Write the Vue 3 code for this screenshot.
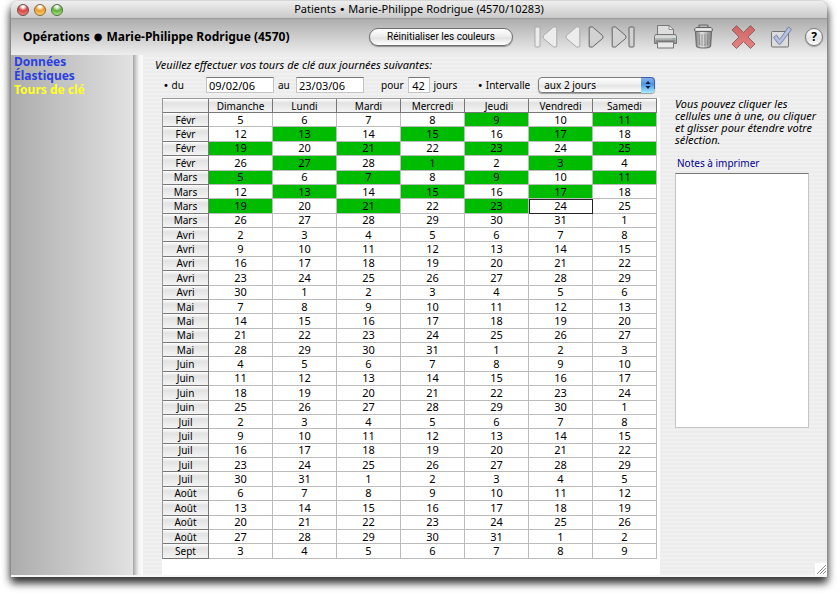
<script setup>
import { ref } from 'vue'

const days = ['Dimanche', 'Lundi', 'Mardi', 'Mercredi', 'Jeudi', 'Vendredi', 'Samedi']
const months = ['Janv', 'Févr', 'Mars', 'Avri', 'Mai', 'Juin', 'Juil', 'Août', 'Sept', 'Octo', 'Nove', 'Déce']
const DAY = 86400000

const start = ref('09/02/06')
const end = ref('23/03/06')
const duration = ref('42')
const interval = ref('aux 2 jours')
const notes = ref('')

const firstCell = Date.UTC(2006, 1, 5)
const firstTurn = Date.UTC(2006, 1, 9)
const lastTurn = Date.UTC(2006, 2, 23)
const focused = Date.UTC(2006, 2, 24)

const marked = ref(new Set())
for (let t = firstTurn; t <= lastTurn; t += 2 * DAY) marked.value.add(t)

const weeks = Array.from({ length: 31 }, (_, w) => {
  const sunday = firstCell + w * 7 * DAY
  return {
    id: sunday,
    month: months[new Date(sunday).getUTCMonth()],
    cells: days.map((_, d) => {
      const time = sunday + d * DAY
      return { time, label: new Date(time).getUTCDate() }
    })
  }
})

function toggle(time) {
  if (marked.value.has(time)) marked.value.delete(time)
  else marked.value.add(time)
}

function reset() {
  marked.value.clear()
}
</script>

<template>
  <div class="window">
    <header class="titlebar">
      <div class="lights">
        <button class="light red" aria-label="Fermer"></button>
        <button class="light amber" aria-label="Réduire"></button>
        <button class="light green" aria-label="Agrandir"></button>
      </div>
      <div class="caption">Patients <span class="dot">•</span> Marie-Philippe Rodrigue (4570/10283)</div>
      <div></div>
    </header>

    <div class="toolbar">
      <h1 class="heading"><span>Opérations</span><span class="disc">●</span><span>Marie-Philippe Rodrigue (4570)</span></h1>
      <button class="pill" @click="reset">Réinitialiser les couleurs</button>
      <div class="tools">
        <div class="nav-tools">
          <button class="tool" aria-label="Premier" disabled>
            <svg width="24" height="22" viewBox="0 0 24 22" fill="#ececec" stroke="#a9a9a9">
              <rect x="1" y="1" width="5" height="20" rx="1" />
              <path d="M19.500 1H22a.8.8 0 0 1 .8.8v18.400a.8.8 0 0 1-.8.8h-2.500L9.500 12.500q-1-1.500 0-3z" />
            </svg>
          </button>
          <button class="tool" aria-label="Précédent" disabled>
            <svg width="16" height="22" viewBox="0 0 16 22" fill="#ececec" stroke="#a9a9a9">
              <path d="M11.500 1H14a.8.8 0 0 1 .8.800v18.400a.8.8 0 0 1-.8.800h-2.500L1.500 12.500q-1-1.500 0-3z" />
            </svg>
          </button>
          <button class="tool" aria-label="Suivant">
            <svg width="16" height="22" viewBox="0 0 16 22" fill="#d2d2d2" stroke="#636363">
              <path d="M4.500 1H2a.8.8 0 0 0-.8.800v18.400a.8.8 0 0 0 .8.800h2.500L14.500 12.500q1-1.500 0-3z" />
            </svg>
          </button>
          <button class="tool" aria-label="Dernier">
            <svg width="24" height="22" viewBox="0 0 24 22" fill="#d2d2d2" stroke="#636363">
              <path d="M4.500 1H2a.8.8 0 0 0-.8.800v18.400a.8.8 0 0 0 .8.800h2.500L14.500 12.500q1-1.500 0-3z" />
              <rect x="18" y="1" width="5" height="20" rx="1" />
            </svg>
          </button>
        </div>
        <button class="tool" aria-label="Imprimer">
          <svg width="28" height="26" viewBox="0 0 28 26">
            <defs>
              <linearGradient id="printerBody" x1="0" y1="0" x2="0" y2="1">
                <stop offset="0" stop-color="#d6d9d8" />
                <stop offset="1" stop-color="#8f9291" />
              </linearGradient>
            </defs>
            <path d="M4.500 12V1.500H16l4.500 4V12z" fill="#dedede" stroke="#777" />
            <path d="M16 1.500v4h4.500z" fill="#fafafa" stroke="#777" stroke-width=".8" />
            <path d="M2.500 10.500h20l1 2v7h-22v-7z" fill="url(#printerBody)" stroke="#777" stroke-linejoin="round" />
            <path d="M2 13h21" stroke="#ecefee" />
            <path d="M3 17h19" stroke="#777" />
            <rect x="19.500" y="14" width="2.500" height="1.500" fill="#8fa793" />
            <path d="M4.500 17.500h16v6.500h-16z" fill="#e9e9e9" stroke="#777" />
            <path d="M5 18.500h15" stroke="#bbb" />
          </svg>
        </button>
        <button class="tool" aria-label="Supprimer">
          <svg width="26" height="26" viewBox="0 0 26 26">
            <defs>
              <linearGradient id="canBody">
                <stop offset="0" stop-color="#808080" />
                <stop offset=".4" stop-color="#e4e4e4" />
                <stop offset="1" stop-color="#808080" />
              </linearGradient>
            </defs>
            <path d="M6 3.500V2q0-1 1-1h7q1 0 1 1v1.500" fill="none" stroke="#666" stroke-width="1.200" />
            <path d="M2.500 7.500h16l-.8 14.500q-.2 2-7.200 2t-7.200-2z" fill="url(#canBody)" stroke="#666" />
            <path d="M6 9.500l.6 11.500M9 10v12M12 10v12M15 9.500l-.6 11.500" fill="none" stroke="#888" />
            <path d="M3 3.500h15q1.500 1 1.500 2.500 0 1.500-1.500 1.500H3q-1.500 0-1.500-1.500 0-1.500 1.500-2.500z" fill="#d5d5d5" stroke="#666" />
            <path d="M3 5.300h15" stroke="#f3f3f3" />
          </svg>
        </button>
        <button class="tool" aria-label="Annuler">
          <svg width="26" height="26" viewBox="0 0 26 26">
            <defs>
              <linearGradient id="cross" x1="0" y1="0" x2="0" y2="1">
                <stop offset="0" stop-color="#cf6464" />
                <stop offset="1" stop-color="#e48484" />
              </linearGradient>
            </defs>
            <path d="M5.500 1.500L12.500 8.500l7-7 4.500 4.500-7 7 7 7-4.500 4.500-7-7-7 7L1 20l7-7L1 6z" fill="url(#cross)" stroke="#8c6262" stroke-linejoin="round" />
          </svg>
        </button>
        <button class="tool" aria-label="Valider">
          <svg width="24" height="26" viewBox="0 0 24 26">
            <rect x="2.500" y="7.500" width="17" height="15.500" rx="1" fill="#dcdcdc" stroke="#737373" />
            <path d="M4.500 13.500l3-2.500 3 4.500L19.500 3l3 2.500-11 14.500q-1 .8-2 0z" fill="#b4c0dd" stroke="#707ba0" stroke-width=".9" stroke-linejoin="round" />
          </svg>
        </button>
        <button class="tool help" aria-label="Aide">?</button>
      </div>
    </div>

    <div class="body">
      <nav class="sidebar">
        <a href="#donnees">Données</a>
        <a href="#elastiques">Élastiques</a>
        <a href="#tours" class="current">Tours de clé</a>
      </nav>
      <div class="splitter"></div>

      <main class="content">
        <p class="intro">Veuillez effectuer vos tours de clé aux journées suivantes:</p>
        <form class="filters" @submit.prevent>
          <label class="bullet" for="start"><span class="dot">•</span> du</label>
          <input id="start" v-model="start" class="field date" />
          <label class="until" for="end">au</label>
          <input id="end" v-model="end" class="field date" />
          <label class="for" for="duration">pour</label>
          <input id="duration" v-model="duration" class="field short" />
          <span>jours</span>
          <label class="step" for="interval"><span class="dot">•</span> Intervalle</label>
          <span class="popup">
            <select id="interval" v-model="interval">
              <option>aux 2 jours</option>
              <option>aux 3 jours</option>
            </select>
            <svg class="arrows" width="14" height="16" viewBox="0 0 14 16">
              <defs>
                <linearGradient id="aqua" x1="0" y1="0" x2="0" y2="1">
                  <stop offset="0" stop-color="#8fb6ea" />
                  <stop offset=".45" stop-color="#4f94e4" />
                  <stop offset="1" stop-color="#a6ecff" />
                </linearGradient>
              </defs>
              <path d="M0 0h10q4 0 4 4v8q0 4-4 4H0z" fill="url(#aqua)" />
              <path d="M0 .5h10q3.500 0 3.500 3.500v8" fill="none" stroke="#3a5fae" />
              <path d="M7 4l2.500 3h-5zM7 12l2.500-3h-5z" fill="#0c1e3c" />
            </svg>
          </span>
        </form>

        <div class="columns">
          <div class="sheet">
            <table>
              <thead>
                <tr>
                  <th class="corner"></th>
                  <th v-for="day in days" :key="day" scope="col">{{ day }}</th>
                </tr>
              </thead>
              <tbody>
                <tr v-for="week in weeks" :key="week.id">
                  <th scope="row">{{ week.month }}</th>
                  <td
                    v-for="cell in week.cells"
                    :key="cell.time"
                    :class="{ marked: marked.has(cell.time), focused: cell.time === focused }"
                    @click="toggle(cell.time)"
                  >{{ cell.label }}</td>
                </tr>
              </tbody>
            </table>
          </div>

          <aside class="side">
            <p class="hint">Vous pouvez cliquer les cellules une à une, ou cliquer et glisser pour étendre votre sélection.</p>
            <label class="notes-label" for="notes">Notes à imprimer</label>
            <textarea id="notes" v-model="notes" class="notes"></textarea>
          </aside>
        </div>

        <svg class="grip" width="12" height="12" viewBox="0 0 12 12">
          <rect width="12" height="12" fill="#fff" />
          <path d="M2 11L11 2M5 11l6-6M8 11l3-3" stroke="#8c8c8c" fill="none" />
        </svg>
      </main>
    </div>
  </div>
</template>

<style>
body {
  margin: 0;
  background: #fff;
}
</style>

<style scoped>
* {
  box-sizing: border-box;
}

.window {
  display: flex;
  flex-direction: column;
  height: calc(100vh - 20px);
  margin: 1px 11px 19px;
  overflow: hidden;
  border-radius: 7px 7px 0 0;
  background: repeating-linear-gradient(#f0f0f0 0 2px, #ececec 2px 4px);
  box-shadow: 0 0 1px 0 #777, 0 6px 9px 0 rgba(0, 0, 0, 0.75), 0 3px 10px 0 rgba(0, 0, 0, 0.35);
  font-family: "Noto Sans", "Open Sans", sans-serif;
  font-size: 10px;
  line-height: 12px;
  color: #000;
}

button {
  font-family: inherit;
  color: inherit;
}

.dot,
.disc {
  font-family: "DejaVu Sans", sans-serif;
}

.titlebar {
  display: grid;
  grid-template-columns: 1fr auto 1fr;
  align-items: center;
  flex: none;
  height: 18px;
  padding: 0 6px;
  background: linear-gradient(#efefef, #c9c9c9);
  border-bottom: 1px solid #9c9c9c;
}

.lights {
  display: flex;
  gap: 5px;
}

.light {
  width: 12px;
  height: 12px;
  padding: 0;
  border: 1px solid #6b4a4a;
  border-radius: 50%;
}

.red {
  background: radial-gradient(circle at 50% 15%, #fff 0 10%, #d9423f 45%, #ff9a94 100%);
}

.amber {
  border-color: #8a6534;
  background: radial-gradient(circle at 50% 15%, #fff 0 10%, #ee9a2b 45%, #ffe88a 100%);
}

.green {
  border-color: #47703a;
  background: radial-gradient(circle at 50% 15%, #fff 0 10%, #5fae3a 45%, #c8f79a 100%);
}

.caption {
  font-size: 11px;
}

.toolbar {
  display: grid;
  grid-template-columns: 358px auto 1fr;
  align-items: center;
  flex: none;
  height: 36px;
  padding-right: 4px;
  background: linear-gradient(#adadad, #c4c4c4 35%, #ededed);
}

.heading {
  display: flex;
  gap: 4px;
  margin: 0;
  padding-left: 12px;
  font-size: 12px;
  font-weight: 700;
  white-space: nowrap;
}

.disc {
  font-size: 10px;
}

.pill {
  width: 144px;
  height: 18px;
  padding: 0;
  border: 1px solid #6f6f6f;
  border-radius: 9px;
  background: linear-gradient(#fff, #ececec 50%, #e2e2e2 55%, #fff);
  box-shadow: 0 1px 1px rgba(0, 0, 0, 0.35);
  font-family: Roboto, sans-serif;
  font-size: 10px;
  line-height: 14px;
}

.tools,
.nav-tools {
  display: flex;
  align-items: center;
}

.tools {
  justify-content: flex-end;
  gap: 12px;
}

.nav-tools {
  gap: 7px;
  padding-right: 6px;
}

.tool {
  display: block;
  padding: 0;
  border: 0;
  background: none;
}

.tool svg {
  display: block;
}

.help {
  width: 18px;
  height: 18px;
  border: 1px solid #777;
  border-radius: 50%;
  background: linear-gradient(#fff, #e4e4e4 60%, #fff);
  box-shadow: 0 1px 1px rgba(0, 0, 0, 0.3);
  font-size: 12px;
  font-weight: 700;
  line-height: 14px;
}

.body {
  display: flex;
  flex: 1;
  min-height: 0;
  border-bottom: 2px solid #f6f6f6;
}

.sidebar {
  flex: none;
  width: 122px;
  padding: 0 3px;
  background: linear-gradient(90deg, #acacac, #e2e2e2);
}

.sidebar a {
  display: block;
  font-size: 12px;
  font-weight: 700;
  line-height: 14px;
  color: #2b3fe0;
  text-decoration: none;
}

.sidebar .current {
  color: #ffff1e;
}

.splitter {
  flex: none;
  width: 10px;
  background: linear-gradient(90deg, #a4a4a4, #d0d0d0 30%, #f6f6f6 60%, #fafafa);
}

.content {
  position: relative;
  display: flex;
  flex-direction: column;
  flex: 1;
  min-width: 0;
  padding-left: 12px;
}

.intro {
  margin: 4px 0 6px;
  font-size: 11px;
  font-style: italic;
}

.filters {
  display: flex;
  align-items: center;
  height: 16px;
  gap: 4px;
}

.bullet {
  width: 39px;
  margin-left: 8px;
}

.until {
  width: 14px;
}

.field {
  height: 16px;
  padding: 0 2px;
  border: 1px solid #c4c4c4;
  border-top-color: #777;
  background: #fff;
  font-family: inherit;
  font-size: 11px;
  line-height: 14px;
}

.date {
  width: 68px;
}

.short {
  width: 22px;
  text-align: center;
}

.for {
  margin-left: 13px;
}

.step {
  margin-left: 16px;
}

.popup {
  position: relative;
  display: block;
  width: 117px;
  height: 16px;
  margin-left: 4px;
}

.popup select {
  display: block;
  width: 100%;
  height: 16px;
  padding: 0 18px 0 5px;
  appearance: none;
  border: 1px solid #7d7d7d;
  border-radius: 4px;
  background: linear-gradient(#fff, #ececec 50%, #e4e4e4 55%, #fff);
  box-shadow: 0 1px 1px rgba(0, 0, 0, 0.35);
  font-family: inherit;
  font-size: 10px;
  line-height: 14px;
  color: #000;
}

.arrows {
  position: absolute;
  top: 0;
  right: 0;
  pointer-events: none;
}

.columns {
  display: flex;
  flex: 1;
  min-height: 0;
  margin-top: 5px;
  padding-left: 7px;
}

.sheet {
  flex: 0 1 498px;
  padding: 0 3px 16px 0;
  background: #fff;
}

table {
  width: 100%;
  height: 100%;
  table-layout: fixed;
  border-collapse: separate;
  border-spacing: 0;
  border-top: 1px solid #999;
  border-left: 1px solid #999;
}

th,
td {
  height: 14px;
  padding: 0;
  text-align: center;
  font-weight: 400;
  line-height: 12px;
}

th {
  border-right: 1px solid #777;
  border-bottom: 1px solid #777;
  background: linear-gradient(#fff, #e2e2e2 30%, #f4f4f4);
  font-size: 10px;
}

.corner {
  width: 46px;
}

td {
  border-right: 1px solid #bcbcbc;
  border-bottom: 1px solid #bcbcbc;
  background: #fff;
  font-size: 11px;
}

.marked {
  background: #00bc00;
}

.focused {
  outline: 1px solid #222;
  outline-offset: -1px;
}

.side {
  flex: 1;
  min-width: 0;
  padding: 0 18px 0 15px;
}

.hint {
  margin: 0 -12px 11px 0;
  font-size: 11px;
  font-style: italic;
}

.notes-label {
  display: block;
  margin: 0 0 4px 2px;
  color: #000090;
}

.notes {
  display: block;
  width: 100%;
  height: 255px;
  resize: none;
  border: 1px solid #c4c4c4;
  border-top-color: #777;
  background: #fff;
  font-family: inherit;
  font-size: 11px;
}

.grip {
  position: absolute;
  right: 0;
  bottom: 0;
}
</style>
